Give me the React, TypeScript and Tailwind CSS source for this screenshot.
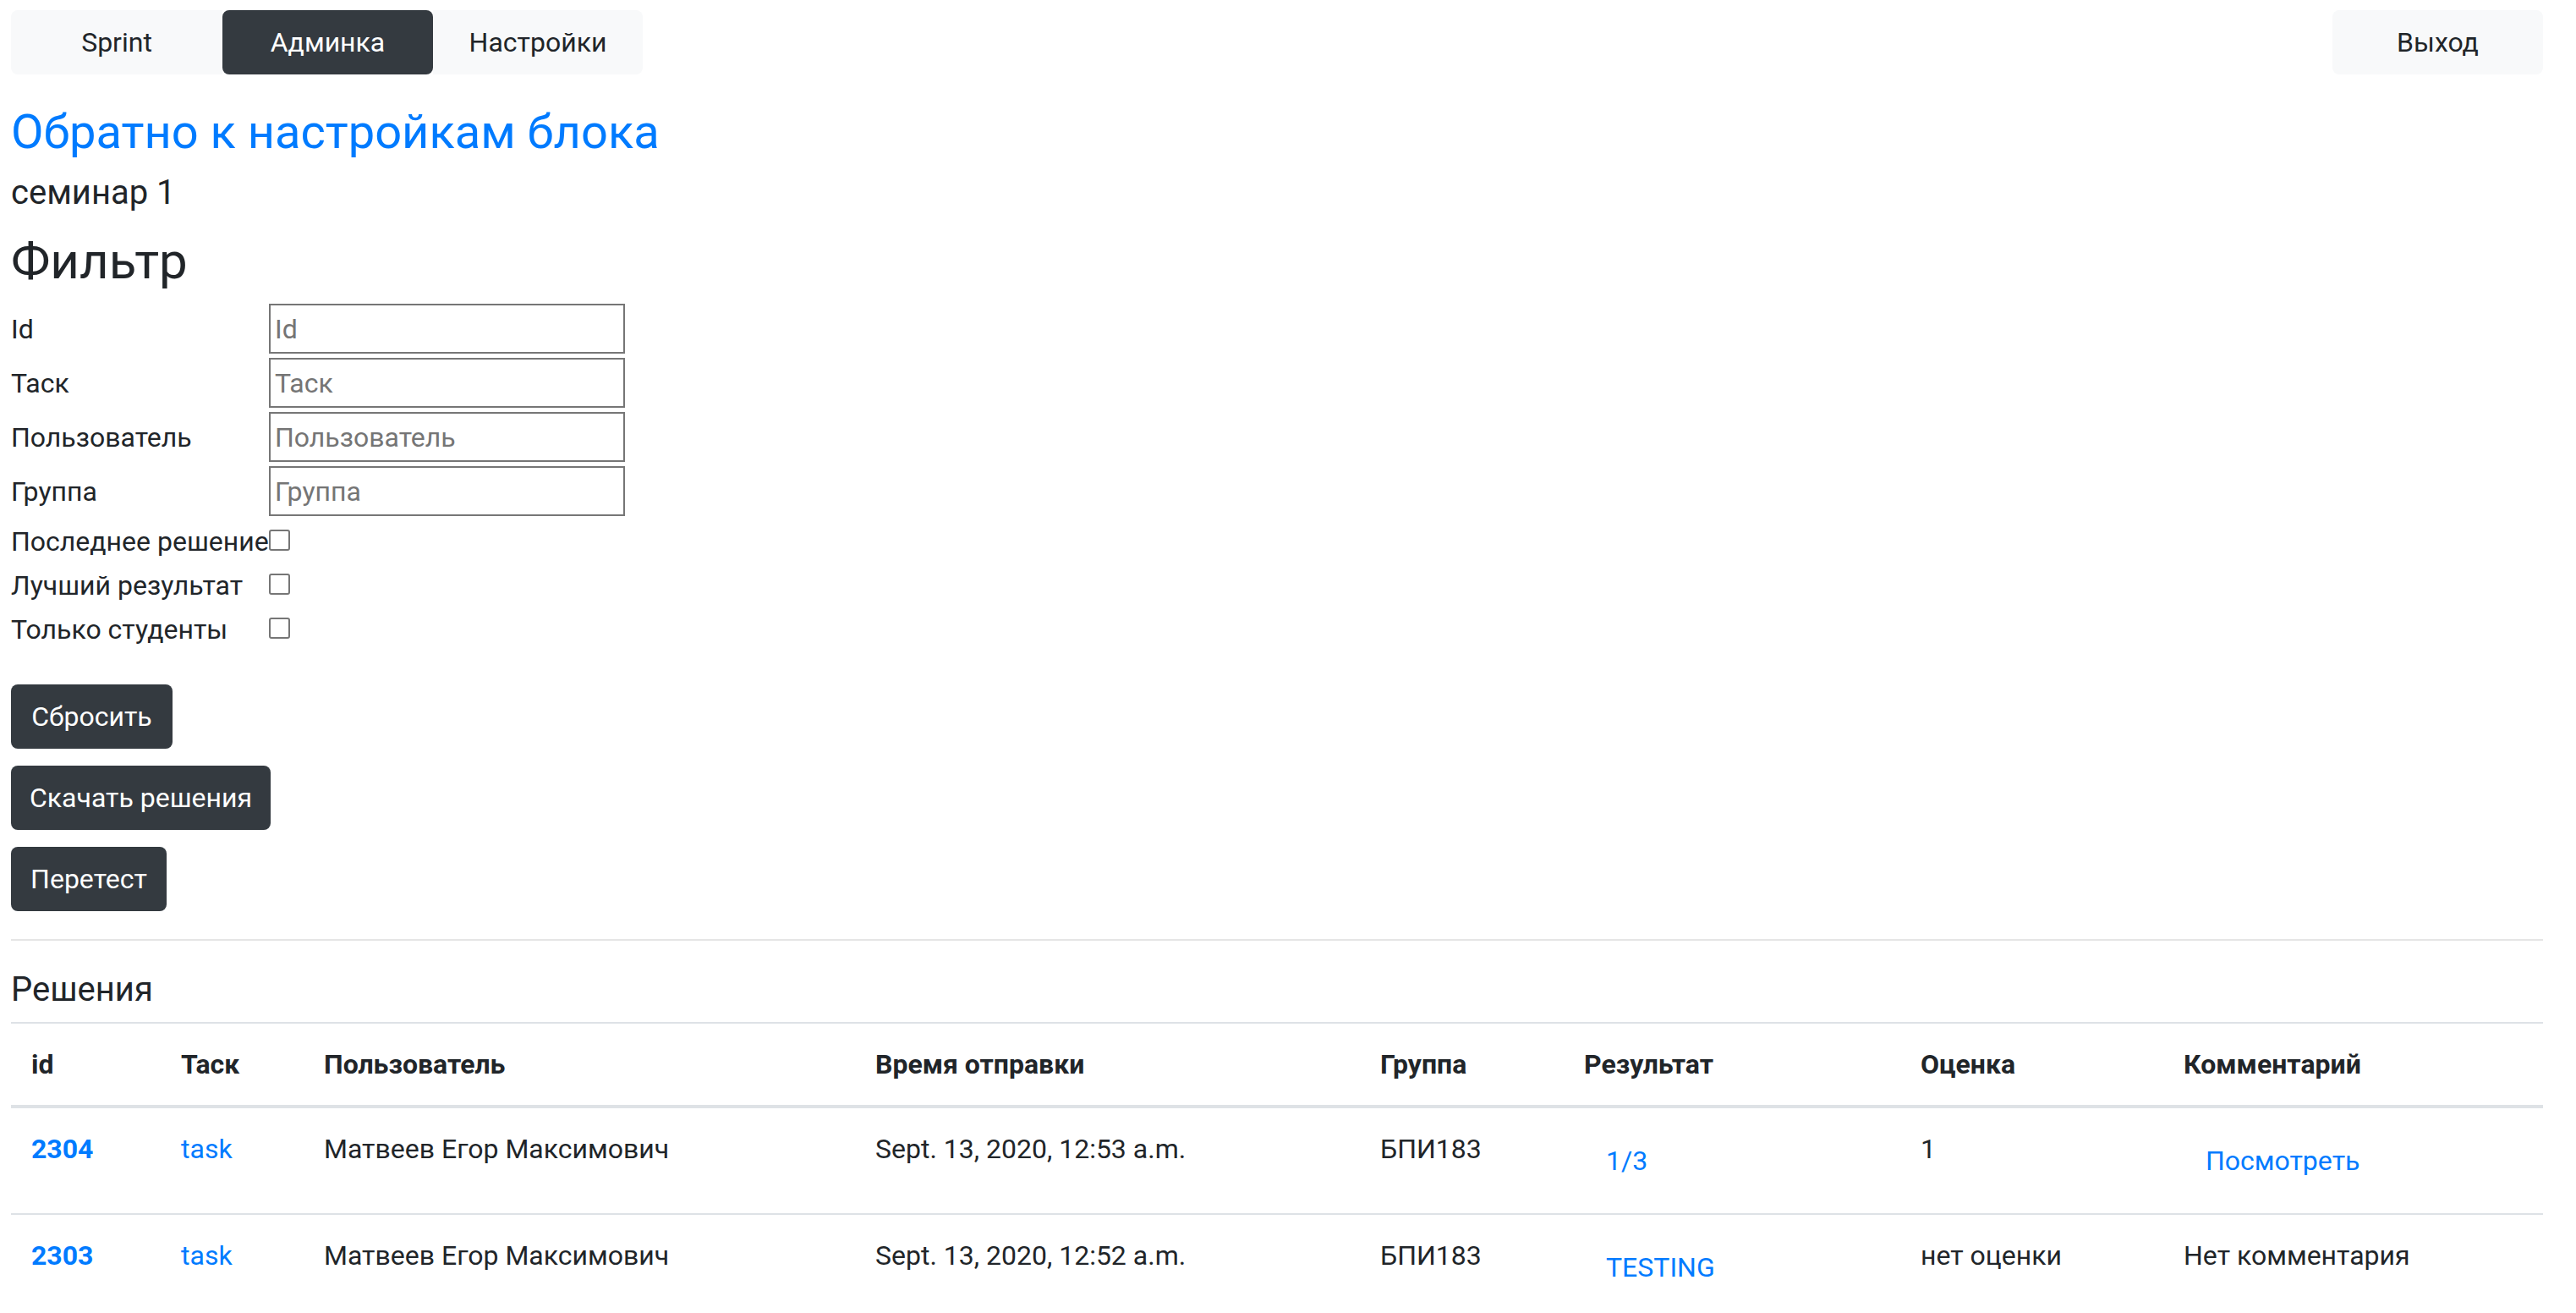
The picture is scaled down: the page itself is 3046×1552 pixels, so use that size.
import React from "react";

const cols = "grid grid-cols-[177px_169px_652px_597px_241px_398px_311px_449px]";

const rows = [
    {
        id: "2304",
        time: "Sept. 13, 2020, 12:53 a.m.",
        result: "1/3",
        grade: "1",
        comment: null as string | null,
    },
    {
        id: "2303",
        time: "Sept. 13, 2020, 12:52 a.m.",
        result: "TESTING",
        grade: "нет оценки",
        comment: "Нет комментария",
    },
];

function LinkButton({ children }: { children: React.ReactNode }) {
    return (
        <span className="inline-block border-2 border-transparent px-[24px] py-[12px] text-[#007bff]">
            {children}
        </span>
    );
}

function FilterInput({ label }: { label: string }) {
    return (
        <div className="flex items-center h-[59px]">
            <div className="w-[305px]">{label}</div>
            <input
                placeholder={label}
                className="w-[421px] h-[59px] border-2 border-[#767676] bg-white px-[5px] text-[32px] text-[#212529] placeholder:text-[#757575] outline-none"
            />
        </div>
    );
}

function FilterCheck({ label }: { label: string }) {
    return (
        <div className="flex items-start h-[52px] pt-[2px]">
            <div className="w-[305px] whitespace-nowrap">{label}</div>
            <input
                type="checkbox"
                className="appearance-none mt-[10px] w-[25px] h-[25px] border-2 border-[#767676] rounded-[3px] bg-white"
            />
        </div>
    );
}

export default function App() {
    return (
        <div className="min-h-screen bg-white pl-[13px] pr-[39px] text-[32px] leading-[48px] text-[#212529] font-[Roboto,sans-serif]">
            {/* top navigation */}
            <div className="flex justify-between pt-[12px]">
                <div className="flex">
                    <div className="w-[250px] h-[76px] flex items-center justify-center bg-[#f8f9fa] rounded-l-[8px]">Sprint</div>
                    <div className="w-[249px] h-[76px] flex items-center justify-center bg-[#343a40] text-white rounded-[8px]">Админка</div>
                    <div className="w-[248px] h-[76px] flex items-center justify-center bg-[#f8f9fa] rounded-r-[8px]">Настройки</div>
                </div>
                <div className="w-[249px] h-[76px] flex items-center justify-center bg-[#f8f9fa] rounded-[8px]">Выход</div>
            </div>

            <div className="mt-[35px] text-[56px] leading-[67px] text-[#007bff]">Обратно к настройкам блока</div>
            <div className="mt-[8px] text-[40px] leading-[60px]">семинар 1</div>
            <div className="mt-[15px] text-[60px] leading-[72px]">Фильтр</div>

            <div className="mt-[14px] flex flex-col gap-[5px]">
                <FilterInput label="Id" />
                <FilterInput label="Таск" />
                <FilterInput label="Пользователь" />
                <FilterInput label="Группа" />
            </div>

            <div className="mt-[4px] flex flex-col">
                <FilterCheck label="Последнее решение" />
                <FilterCheck label="Лучший результат" />
                <FilterCheck label="Только студенты" />
            </div>

            <div className="mt-[39px] flex flex-col items-start gap-[20px]">
                <button className="w-[191px] h-[76px] rounded-[8px] bg-[#343a40] text-white">Сбросить</button>
                <button className="w-[307px] h-[76px] rounded-[8px] bg-[#343a40] text-white">Скачать решения</button>
                <button className="w-[184px] h-[76px] rounded-[8px] bg-[#343a40] text-white">Перетест</button>
            </div>

            <div className="mt-[33px] border-t-2 border-[#e5e5e5]" />

            <div className="mt-[34px] text-[40px] leading-[48px]">Решения</div>

            {/* solutions table */}
            <div className="mt-[14px] border-t-2 border-[#dee2e6]">
                <div className={`${cols} border-b-4 border-[#dee2e6] font-bold`}>
                    <div className="p-[24px]">id</div>
                    <div className="p-[24px]">Таск</div>
                    <div className="p-[24px]">Пользователь</div>
                    <div className="p-[24px]">Время отправки</div>
                    <div className="p-[24px]">Группа</div>
                    <div className="p-[24px]">Результат</div>
                    <div className="p-[24px]">Оценка</div>
                    <div className="p-[24px]">Комментарий</div>
                </div>
                {rows.map((r) => (
                    <div key={r.id} className={`${cols} border-b-2 border-[#dee2e6]`}>
                        <div className="p-[24px] font-bold text-[#007bff]">{r.id}</div>
                        <div className="p-[24px] text-[#007bff]">task</div>
                        <div className="p-[24px]">Матвеев Егор Максимович</div>
                        <div className="p-[24px]">{r.time}</div>
                        <div className="p-[24px]">БПИ183</div>
                        <div className="p-[24px]">
                            <LinkButton>{r.result}</LinkButton>
                        </div>
                        <div className="p-[24px]">{r.grade}</div>
                        <div className="p-[24px]">
                            {r.comment ? r.comment : <LinkButton>Посмотреть</LinkButton>}
                        </div>
                    </div>
                ))}
            </div>
        </div>
    );
}
